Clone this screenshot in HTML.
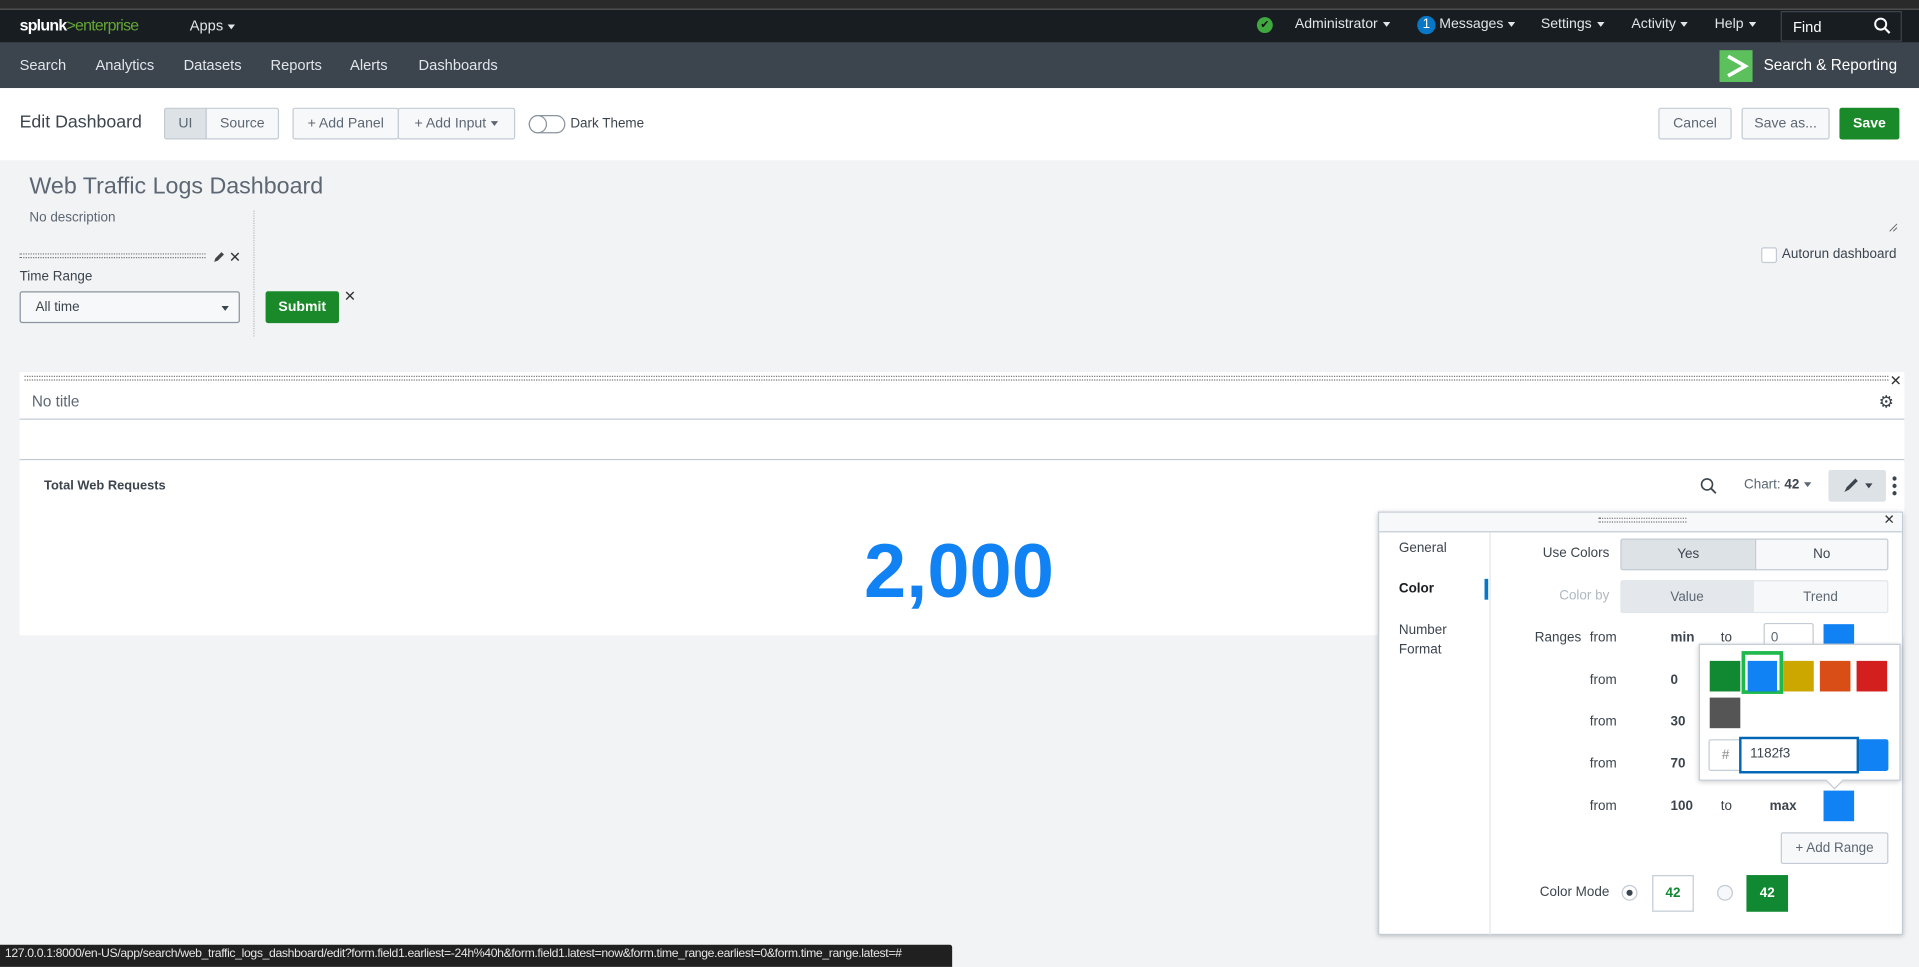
<!DOCTYPE html>
<html><head><meta charset="utf-8"><style>
*{box-sizing:border-box;margin:0;padding:0}
html,body{width:1919px;height:967px;overflow:hidden;background:#f2f3f5}
#w{position:absolute;left:0;top:0;width:1568px;height:790px;transform:scale(1.22385);transform-origin:0 0;font-family:"Liberation Sans",sans-serif;color:#3c444d;background:#f2f3f5}
.a{position:absolute;white-space:nowrap}
.btn{position:absolute;border:1px solid #c3cbd4;background:#f7f8fa;border-radius:2px;font-size:11.5px;color:#5c6773;display:flex;align-items:center;justify-content:center}
.tri{display:inline-block;width:0;height:0;border-left:3.5px solid transparent;border-right:3.5px solid transparent;border-top:4px solid currentColor;vertical-align:middle;margin-left:4px}
.dots{position:absolute;height:4px;border-top:1px dotted #777;border-bottom:1px dotted #777}
.lbl{font-size:11px;color:#3c444d}
.sw{position:absolute;width:25px;height:25px}
</style></head><body><div id="w">
<div class="a" style="left:0;top:0;width:1568px;height:8px;background:#2a2a2a;border-bottom:1px solid #555"></div>
<div class="a" style="left:0;top:8px;width:1568px;height:27px;background:#171d21"></div>
<div class="a" style="left:16px;top:13px;font-size:13px;color:#fff;font-weight:bold;letter-spacing:-0.6px">splunk<span style="color:#65a637;font-weight:normal">&gt;enterprise</span></div>
<div class="a" style="left:155px;top:14px;font-size:12px;color:#e1e6eb">Apps<span class="tri"></span></div>
<div class="a" style="left:1027px;top:14px;width:13px;height:13px;border-radius:50%;background:#3fa83f;color:#111;font-size:9px;text-align:center;line-height:13px">✔</div>
<div class="a" style="left:1058px;top:14px;font-size:11.5px;color:#e1e6eb">Administrator<span class="tri"></span></div>
<div class="a" style="left:1158px;top:13px;width:15px;height:15px;border-radius:50%;background:#0877c6;color:#fff;font-size:11px;text-align:center;line-height:15px">1</div>
<div class="a" style="left:1176px;top:14px;font-size:11.5px;color:#e1e6eb">Messages<span class="tri"></span></div>
<div class="a" style="left:1259px;top:14px;font-size:11.5px;color:#e1e6eb">Settings<span class="tri"></span></div>
<div class="a" style="left:1333px;top:14px;font-size:11.5px;color:#e1e6eb">Activity<span class="tri"></span></div>
<div class="a" style="left:1401px;top:14px;font-size:11.5px;color:#e1e6eb">Help<span class="tri"></span></div>
<div class="a" style="left:1455px;top:9px;width:99px;height:25px;border:1px solid #3c444d;background:#171d21"></div>
<div class="a" style="left:1465px;top:15px;font-size:12px;color:#fff">Find</div>
<svg class="a" style="left:1531px;top:14px" width="14" height="14" viewBox="0 0 14 14"><circle cx="5.7" cy="5.7" r="4.5" fill="none" stroke="#fff" stroke-width="1.6"/><path d="M9 9l4 4" stroke="#fff" stroke-width="1.8"/></svg>
<div class="a" style="left:0;top:35px;width:1568px;height:37px;background:#3c444d"></div>
<div class="a" style="left:16px;top:46px;font-size:12px;color:#e1e6eb">Search</div>
<div class="a" style="left:78px;top:46px;font-size:12px;color:#e1e6eb">Analytics</div>
<div class="a" style="left:150px;top:46px;font-size:12px;color:#e1e6eb">Datasets</div>
<div class="a" style="left:221px;top:46px;font-size:12px;color:#e1e6eb">Reports</div>
<div class="a" style="left:286px;top:46px;font-size:12px;color:#e1e6eb">Alerts</div>
<div class="a" style="left:342px;top:46px;font-size:12px;color:#e1e6eb">Dashboards</div>
<div class="a" style="left:1405px;top:41px;width:27px;height:26px;background:#5cc05c"></div>
<svg class="a" style="left:1405px;top:41px" width="27" height="26"><path d="M7 5l14 8-14 8" fill="none" stroke="#fff" stroke-width="3"/></svg>
<div class="a" style="left:1441px;top:46px;font-size:12.5px;color:#fff">Search &amp; Reporting</div>
<div class="a" style="left:0;top:72px;width:1568px;height:59px;background:#fff"></div>
<div class="a" style="left:16px;top:92px;font-size:14.5px;color:#3c444d">Edit Dashboard</div>
<div class="btn" style="left:134px;top:88px;width:35px;height:26px;background:#dde2e7;border-radius:2px 0 0 2px">UI</div>
<div class="btn" style="left:168px;top:88px;width:60px;height:26px;border-radius:0 2px 2px 0">Source</div>
<div class="btn" style="left:239px;top:88px;width:87px;height:26px">+ Add Panel</div>
<div class="btn" style="left:325px;top:88px;width:96px;height:26px">+ Add Input<span class="tri"></span></div>
<div class="a" style="left:432px;top:94px;width:30px;height:15px;border:1px solid #8a949e;border-radius:8px;background:#fff"></div>
<div class="a" style="left:432px;top:94px;width:15px;height:15px;border:1px solid #8a949e;border-radius:50%;background:#fff"></div>
<div class="a" style="left:466px;top:95px;font-size:11px;color:#3c444d">Dark Theme</div>
<div class="btn" style="left:1355px;top:88px;width:60px;height:26px">Cancel</div>
<div class="btn" style="left:1423px;top:88px;width:72px;height:26px">Save as...</div>
<div class="btn" style="left:1503px;top:88px;width:49px;height:26px;background:#1a8929;border-color:#1a8929;color:#fff;font-weight:bold">Save</div>
<div class="a" style="left:24px;top:142px;font-size:19px;color:#5c6773">Web Traffic Logs Dashboard</div>
<div class="a" style="left:24px;top:172px;font-size:11px;color:#5c6773">No description</div>
<svg class="a" style="left:1543px;top:182px" width="8" height="8"><path d="M1 7L7 1M4 7L7 4" stroke="#666" stroke-width="0.8"/></svg>
<div class="dots" style="left:16px;top:207px;width:152px"></div>
<svg class="a" style="left:173px;top:205px" width="11" height="11"><path d="M2 9l1-3 5-5 2 2-5 5z" fill="#444"/></svg>
<div class="a" style="left:187px;top:203px;font-size:12px;color:#333">✕</div>
<div class="a" style="left:16px;top:220px;font-size:11px;color:#3c444d">Time Range</div>
<div class="a" style="left:16px;top:238px;width:180px;height:26px;border:1px solid #8a949e;border-radius:2px;background:#f7f8fa"></div>
<div class="a" style="left:29px;top:245px;font-size:11px;color:#3c444d">All time</div>
<div class="a" style="left:177px;top:246px;font-size:11px;color:#3c444d"><span class="tri"></span></div>
<div class="a" style="left:207px;top:172px;height:103px;border-left:1px dotted #bbb"></div>
<div class="btn" style="left:217px;top:238px;width:60px;height:26px;background:#1a8929;border-color:#1a8929;color:#fff;font-weight:bold">Submit</div>
<div class="a" style="left:281px;top:235px;font-size:12px;color:#333">✕</div>
<div class="a" style="left:1439px;top:202px;width:13px;height:13px;border:1px solid #c3cbd4;background:#fff;border-radius:2px"></div>
<div class="a" style="left:1456px;top:202px;font-size:11px;color:#3c444d">Autorun dashboard</div>
<div class="a" style="left:16px;top:304px;width:1540px;height:215px;background:#fff"></div>
<div class="dots" style="left:20px;top:307px;width:1523px"></div>
<div class="a" style="left:1544px;top:304px;font-size:12px;color:#333">✕</div>
<div class="a" style="left:26px;top:321px;font-size:12.5px;color:#5c6773">No title</div>
<div class="a" style="left:1535px;top:320px;font-size:14px;color:#3c444d">⚙</div>
<div class="a" style="left:16px;top:342px;width:1540px;border-top:1px solid #c3cbd4"></div>
<div class="a" style="left:16px;top:375px;width:1540px;border-top:1px solid #c3cbd4"></div>
<div class="a" style="left:36px;top:391px;font-size:10.5px;font-weight:bold;color:#3c444d">Total Web Requests</div>
<svg class="a" style="left:1389px;top:390px" width="14" height="14"><circle cx="5.8" cy="5.8" r="4.5" fill="none" stroke="#3c444d" stroke-width="1.3"/><path d="M9 9l4 4" stroke="#3c444d" stroke-width="1.5"/></svg>
<div class="a" style="left:1425px;top:390px;font-size:11px;color:#5c6773">Chart: <b style="color:#3c444d">42</b><span class="tri"></span></div>
<div class="a" style="left:1494px;top:384px;width:47px;height:26px;background:#dde2e7;border-radius:2px"></div>
<svg class="a" style="left:1505px;top:390px" width="14" height="14"><path d="M2 12l2-4 7-7 2 2-7 7z" fill="#3c444d"/></svg>
<div class="a" style="left:1520px;top:391px;font-size:11px;color:#3c444d"><span class="tri"></span></div>
<div class="a" style="left:1546px;top:388px;width:4px;height:18px;background-image:radial-gradient(circle,#3c444d 1.6px,transparent 1.8px);background-size:4px 6px"></div>
<div class="a" style="left:706px;top:432px;font-size:62px;font-weight:bold;color:#1182f3;letter-spacing:0px">2,000</div>
<div class="a" style="left:1126px;top:418px;width:429px;height:346px;background:#fff;border:1px solid #c3cbd4;box-shadow:0 1px 4px rgba(0,0,0,.25)"></div>
<div class="a" style="left:1127px;top:419px;width:427px;height:16px;background:#f7f8fa;border-bottom:1px solid #c3cbd4"></div>
<div class="dots" style="left:1306px;top:423px;width:72px"></div>
<div class="a" style="left:1539px;top:418px;font-size:11px;color:#333">✕</div>
<div class="a" style="left:1217px;top:435px;height:329px;border-left:1px solid #e1e6eb"></div>
<div class="a lbl" style="left:1143px;top:442px">General</div>
<div class="a lbl" style="left:1143px;top:475px;font-weight:bold;color:#171d21">Color</div>
<div class="a" style="left:1213px;top:473px;width:3px;height:17px;background:#0877c6"></div>
<div class="a lbl" style="left:1143px;top:507px;line-height:16px">Number<br>Format</div>
<div class="a lbl" style="left:1240px;top:446px;width:75px;text-align:right">Use Colors</div>
<div class="btn" style="left:1324px;top:440px;width:111px;height:26px;background:#dde2e7;border-radius:2px 0 0 2px;font-size:11px;color:#3c444d">Yes</div>
<div class="btn" style="left:1434px;top:440px;width:109px;height:26px;border-radius:0 2px 2px 0;font-size:11px;color:#3c444d">No</div>
<div class="a lbl" style="left:1240px;top:481px;width:75px;text-align:right;color:#b0b8c0">Color by</div>
<div class="btn" style="left:1324px;top:474px;width:109px;height:27px;background:#e4e8ec;border-color:#e1e6eb;border-radius:2px 0 0 2px;font-size:11px;color:#5c6773">Value</div>
<div class="btn" style="left:1432px;top:474px;width:111px;height:27px;border-color:#e1e6eb;border-radius:0 2px 2px 0;font-size:11px;color:#5c6773">Trend</div>
<div class="a lbl" style="left:1215px;top:515px;width:77px;text-align:right">Ranges</div>
<div class="a lbl" style="left:1299px;top:515px">from</div><div class="a lbl" style="left:1365px;top:515px;font-weight:bold">min</div>
<div class="a lbl" style="left:1406px;top:515px">to</div>
<div class="a" style="left:1441px;top:509px;width:41px;height:24px;border:1px solid #c3cbd4;border-radius:2px"></div>
<div class="a lbl" style="left:1447px;top:515px;color:#5c6773">0</div>
<div class="sw" style="left:1490px;top:510px;background:#1182f3"></div>
<div class="a lbl" style="left:1299px;top:550px">from</div><div class="a lbl" style="left:1365px;top:550px;font-weight:bold">0</div>
<div class="a lbl" style="left:1299px;top:584px">from</div><div class="a lbl" style="left:1365px;top:584px;font-weight:bold">30</div>
<div class="a lbl" style="left:1299px;top:618px">from</div><div class="a lbl" style="left:1365px;top:618px;font-weight:bold">70</div>
<div class="a lbl" style="left:1299px;top:653px">from</div><div class="a lbl" style="left:1365px;top:653px;font-weight:bold">100</div>
<div class="a lbl" style="left:1406px;top:653px">to</div><div class="a lbl" style="left:1446px;top:653px;font-weight:bold">max</div>
<div class="sw" style="left:1490px;top:646px;background:#1182f3"></div>
<div class="btn" style="left:1455px;top:680px;width:88px;height:26px;font-size:11px">+ Add Range</div>
<div class="a lbl" style="left:1240px;top:723px;width:75px;text-align:right">Color Mode</div>
<div class="a" style="left:1325px;top:723px;width:13px;height:13px;border:1px solid #c3cbd4;border-radius:50%;background:#fff"></div>
<div class="a" style="left:1329px;top:727px;width:5px;height:5px;border-radius:50%;background:#3c444d"></div>
<div class="a" style="left:1350px;top:715px;width:34px;height:30px;border:1px solid #c3cbd4;color:#118832;font-weight:bold;font-size:11px;text-align:center;line-height:28px">42</div>
<div class="a" style="left:1403px;top:723px;width:13px;height:13px;border:1px solid #c3cbd4;border-radius:50%;background:#f7f8fa"></div>
<div class="a" style="left:1427px;top:715px;width:34px;height:30px;background:#118832;color:#fff;font-weight:bold;font-size:11px;text-align:center;line-height:30px">42</div>
<div class="a" style="left:1388px;top:526px;width:165px;height:112px;background:#fff;border:1px solid #c3cbd4;box-shadow:0 1px 4px rgba(0,0,0,.2)"></div>
<div class="a" style="left:1494px;top:633px;width:10px;height:10px;background:#fff;transform:rotate(45deg);border-right:1px solid #c3cbd4;border-bottom:1px solid #c3cbd4"></div>
<div class="sw" style="left:1397px;top:540px;background:#118832"></div>
<div class="a" style="left:1423px;top:532px;width:34px;height:35px;border:3px solid #1eb84b"></div>
<div class="sw" style="left:1428px;top:540px;width:24px;background:#1182f3"></div>
<div class="sw" style="left:1457px;top:540px;background:#cba700"></div>
<div class="sw" style="left:1487px;top:540px;background:#d94e17"></div>
<div class="sw" style="left:1517px;top:540px;background:#d41f1f"></div>
<div class="sw" style="left:1397px;top:570px;background:#555"></div>
<div class="a" style="left:1396px;top:604px;width:28px;height:26px;border:1px solid #c3cbd4;border-radius:2px 0 0 2px;font-size:11px;color:#888;text-align:center;line-height:24px">#</div>
<div class="a" style="left:1519px;top:604px;width:24px;height:26px;background:#1182f3;border-radius:0 2px 2px 0"></div>
<div class="a" style="left:1421px;top:602px;width:98px;height:30px;border:2px solid #0066b5;background:#fff"></div>
<div class="a" style="left:1430px;top:610px;font-size:11px;color:#3c444d">1182f3</div>
<div class="a" style="left:0;top:772px;width:778px;height:18px;background:#202020;border-radius:0 2px 0 0"></div>
<div class="a" style="left:4px;top:774px;font-size:10px;color:#e6e6e6;letter-spacing:-0.3px">127.0.0.1:8000/en-US/app/search/web_traffic_logs_dashboard/edit?form.field1.earliest=-24h%40h&amp;form.field1.latest=now&amp;form.time_range.earliest=0&amp;form.time_range.latest=#</div>
</div></body></html>
